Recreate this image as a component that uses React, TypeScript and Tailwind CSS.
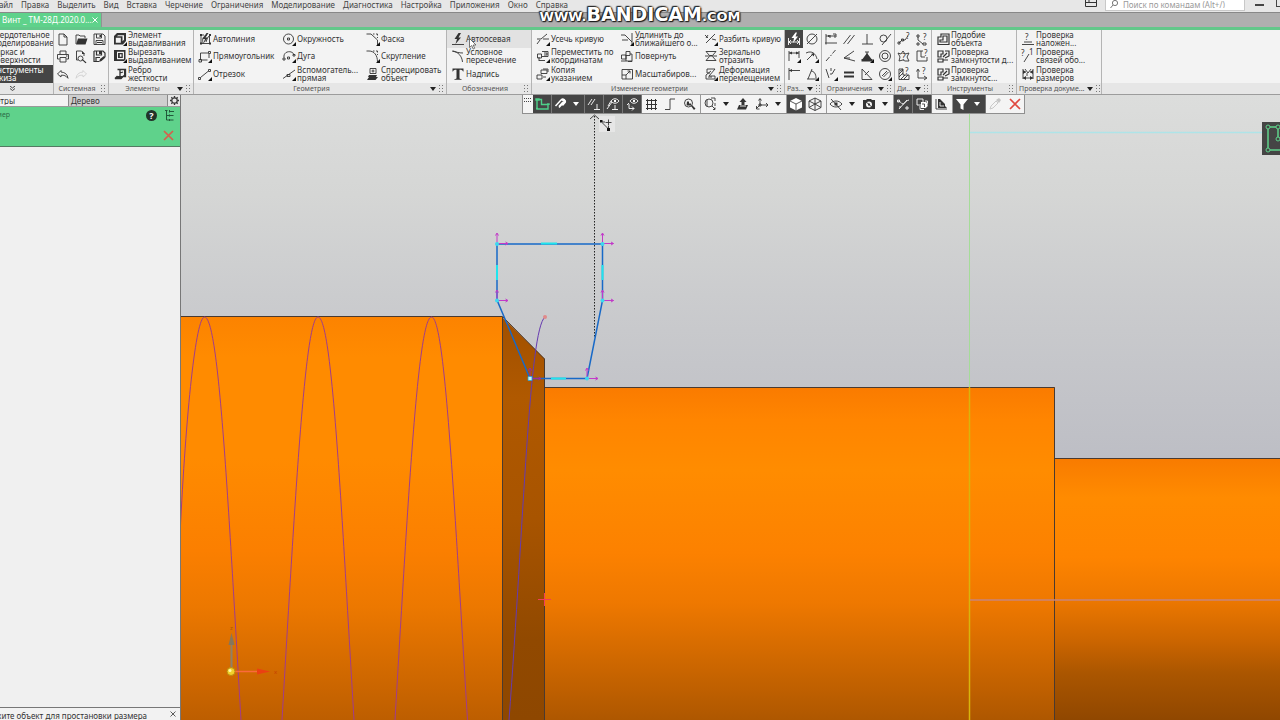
import React from "react";

type Glyph = { s?: string; f?: string; h?: string; w?: number; drop?: boolean; t?: [number, number, string][] };

const glyphs: Record<string, Glyph> = {
  file: { s: "M4 3h5l3 3v8H4zM9 3v3h3" },
  open: { s: "M3 13V4h3l1 1h5v2", f: "M3 13.5l2-6h9.500l-2 6z" },
  save: { s: "M3 3h9l2 2v8.500H3zM5.500 3v4h5V3M5 13.500V9.500h7v4", f: "M8.500 4h1.500v2H8.500zM6 11h5v1H6z" },
  print: { s: "M5 6V3h6v3M4.500 11H2.500V6.500h11V11h-2M5 9.500h6v4.500H5z", f: "M11 7.500h1.500v1H11z" },
  preview: { s: "M5 12H3.500V3h5l2.500 2.500V8M7.500 10.500m-2.500 0a2.500 2.500 0 1 0 5 0a2.500 2.500 0 1 0-5 0", f: "M8.500 11.500l1-.5 4 3.500-1 .8zM8 3h1v3h3l-3-3z" },
  saveas: { s: "M3 3h9l2 2v4M3 3v10.500h5M5.500 3v4h5V3M5 13.500V9.500h4", f: "M8 3h2.500v3H8zM8 14l1-3 4-3 1.500 1.500-4 3.500z", w: 1.2 },
  undo: { s: "M6 4.500L2.500 8 6 11V9.300c3-.5 5 .5 7 3-.500-4-3-6-7-6.300z" },
  redo: { s: "M10 4.500L13.500 8 10 11V9.300c-3-.5-5 .5-7 3 .5-4 3-6 7-6.300z" },
  extrude: { f: "M5 2h9v8l-3 3.500H2V5zM3.800 6.800v5h5v-5zM6 4.300l-1 1h5.500v5l1.500-1.500V4.300z", drop: true },
  cut: { f: "M2 2h11.500v9.500L12 13H2zM5 3.800v7.500h7V3.800zM6 5h4.800v5H6zM7.800 6.300v2.400h1.700V6.300z", drop: true },
  rib: { s: "M5.500 3.500h8v7h-2M3 12.500l2.500-2.500M3 12.500h6l3-3M8 4v7M8 7l3-1", w: 1.3, f: "M2.500 13h6.500l2.500-3h-6zM12 3h2v8h-2z" },
  autoline: { s: "M4 4h3M4 4v8.500M12.500 4v8M5 12.500h7M6 12c-1-4 0-7 4-8M9 11c1-3 2-5 3-6", f: "M9.500 2l-4 6h2.500l-2 5 5-6.500H8.500L11.500 2zM3 3h2v2H3zM12 3h2v2h-2zM3 11.500h2v2H3zM12 11.500h2v2h-2z" },
  rect: { s: "M3.500 5h8M3.500 5v7h7M12 6v4M11.500 3.500h2v2h-2zM2 11.500h2.500V14H2z", drop: true },
  line: { s: "M3.500 11.500l8-6.500M1.500 11.500h2v2h-2zM11.500 3.500h2v2h-2z", drop: true },
  circle: { s: "M7.500 8m-5 0a5 5 0 1 0 10 0a5 5 0 1 0-10 0M6.500 7h2v2h-2z", drop: true },
  arc: { s: "M3 9.500C2 2.500 12 2 13 7M2 10h2v2H2zM6.500 9h2v2h-2zM12 6.500h2v1.500h-2z", drop: true },
  aux: { s: "M2 12.500L14 4M6 8.500h3v2H6z", drop: true },
  chamfer: { s: "M1.500 3h4.500L12.500 9v5M8 3h1.500M11 3h1.500v1.500M12.500 6v1", drop: true },
  fillet: { s: "M1.500 3H4c5 0 8.500 4 8.500 11M8 3h1.500M11 3h1.500v1.500M12.500 6v1", drop: true },
  project: { s: "M5 2.500h6v5H5zM8 3.500v3M6.500 5h3", f: "M4 9h8l-1 2h2l-2.500 3H2l2-3H3z" },
  auto: { s: "M2 13.500h12", f: "M8.500 2l-4 6H7l-1.500 5L11 6.500H8.500L11 2z" },
  intersect: { s: "M2 3c4 1 7 2 11 2M3 3c5 1 9 5 9.500 11" },
  text: { f: "M2.500 2.500h11v3H13c-.3-1.300-1-1.800-3.500-1.800V12c0 .8.500 1 2 1v.8h-7V13c1.500 0 2-.2 2-1V3.700C4 3.700 3.300 4.200 3 5.500h-.500z" },
  trim: { s: "M2 8h4l6-5M2 13l3-4M8 8h6", drop: true },
  move: { s: "M2.500 6h4v4h-4zM7 3.500h6v5H7M4 12.500h6M9 5h3v2H9M4 9v4", drop: true },
  copy: { s: "M6 4h6v3.500H6zM8 3h5v3M2 9h5v4H2zM8 11h3", drop: true },
  extend: { s: "M2 4h4l7 7M13 2v12M3 9h6", drop: true },
  rotate: { s: "M7 3.500h4v4H7zM2.500 7H7v4H2.500zM11 6h2v7.500H9M2 13h11M7 7v6" },
  scale: { s: "M3 3.500h10.500V13H3zM3 9h4v4M7 9l4-4M8.500 5H11v2.500" },
  split: { s: "M3 12L12 3M2 4l3 3M5 4L3 7M9 8l4 1", drop: true },
  mirror: { s: "M3 3.500h10l-3.500 4h-3zM2 8h12M6.500 8.500L3 12.500h10l-3.500-4" },
  deform: { s: "M4 3h8l-6 7h6v3H3V9l5-4M4 3v4h3M5 11h4", drop: true },
  autodim: { s: "M2.500 7v7M13.500 7v7M3 11h10M5 9l-2 2 2 2M11 9l2 2-2 2", f: "M9.500 1.500L5.500 7H8l-1 5 5-6.500H9.500l1.500-4z" },
  dia: { s: "M8 8m-5 0a5 5 0 1 0 10 0a5 5 0 1 0-10 0M3 13L13 3" },
  lindim: { s: "M3 3v10M13 3v7M3 5h10", f: "M3 5l3-1.500v3zM13 5l-3-1.500v3z", drop: true },
  raddim: { s: "M2 5c6-3 10 1 11 6M3 12l6-6", f: "M10 5v3.500L7 6z", drop: true },
  levdim: { s: "M3 2v12M3 4.500h11", f: "M3 4.500L6 3v3z" },
  angdim: { s: "M3 13h10M4 13L8 3M7 5c3 0 5 3 5 7", drop: true },
  fix: { s: "M3 3v10.500M2 12h12M3 5h9M7 4v3M12 4v3M10 3h3v3", f: "M5 4l3 1-3 1z" },
  par: { s: "M2.500 13L9.500 4M6.500 13l7-9" },
  perp: { s: "M3 13h11M8 3v10" },
  tan: { s: "M6.500 7.500m-3.500 0a3.500 3.500 0 1 0 7 0a3.500 3.500 0 1 0-7 0M5 14L14 3" },
  col: { s: "M3 13l3.500-4M7.500 8l1-1.200M9.500 5.500l3-3.500" },
  ang: { s: "M13 3L3 10M3 10l11 3M3 10h6" },
  anchor: { s: "M8 4v5M6 4h4", f: "M8 5L3.500 11H2.500v2.500h11V11h-1z", drop: true },
  conc: { s: "M8 8m-5.500 0a5.500 5.500 0 1 0 11 0a5.500 5.500 0 1 0-11 0M8 8m-3 0a3 3 0 1 0 6 0a3 3 0 1 0-6 0" },
  sym: { s: "M3 3l3 9M12 3l-3 5M8 2v3M8 7v2", drop: true },
  equal: { f: "M3 5.500h10v2H3zM3 9.500h10v2H3z" },
  tri: { s: "M3 3v10.500h10zM6 9l4-4" },
  nofix: { s: "M8 8m-5.500 0a5.500 5.500 0 1 0 11 0a5.500 5.500 0 1 0-11 0M5 10l5-5M6.500 11l5-5", drop: true },
  q1: { s: "M3 12l3-3 3 0 3-4M2 11h2v2H2zM5.500 8h2v2h-2z", t: [[10, 7.5, "?"]] },
  q2: { s: "M3 4h2v2H3zM4 6v3l5 4M3 12h2v2H3zM9 12h3v2H9z", t: [[9, 9, "?"]] },
  q3: { s: "M2 5l3 1 2-3 2 3 4-1-2 4 2 4H9l-2-1-4 1 1-4z", t: [[6, 12, "?"]] },
  q4: { s: "M9 3H3v10h10V9M7 3v6h4", t: [[10, 8, "?"]] },
  q5: { s: "M3 3h4v6h6v4.500H3zM4 5l3-2M3 8l4-4M3 11l4-4M5 13l4-4M8 13l4-4", t: [[9, 8, "?"]] },
  q6: { s: "M4 4v8h8M2.500 5.500L4 3l1.500 2.500M10 10l3 2-3 2", t: [[8, 8, "?"]] },
  similar: { s: "M3 6h3V3h8v10.500H3zM8 5h4v6H5V9h3z", w: 1.2 },
  closed: { s: "M3 3h5v3H6v3H3zM10 3h4v5l-4 2M3 11h5v3H3zM8 9l4-4M8 12h5", w: 1.2 },
  chk1: { s: "M2 13.500h12M4 11h8", t: [[5, 9, "?"]] },
  chk2: { s: "M4 14l5-8", t: [[1, 8, "?"], [9, 7, "1"]] },
  chk3: { s: "M3 3v10M13 3v10M3 6h3M10 6h3M3 12h10M5 3l3 4 3-4M7 7v3", f: "M3 12l3-2v4zM13 12l-3-2v4zM3 4l3 2-3 2zM13 4l-3 2 3 2z" },
  sketch: { s: "M3 3.500h4.500v5H14V13H3zM2 3h3v1H2zM2 12.500h2M13 8h2v1", w: 1.4 },
  magnet: { s: "M2.500 10L8 4c2-2 4.500-.5 3 2l-5 5.500M6 10.500l4-4.500", w: 1.5, f: "M8 4c2-2 6-.5 5 2.500L10 10 8.500 8.500 11 6z" },
  snap: { s: "M2 9l4-6M5 9l4-6M8 13.500h6M11 8v5.500" },
  snapeye: { s: "M6 5c2-3 6-3 8 0-2 3-6 3-8 0zM3 10l3-5M2 13l5-7M7 13.500h6M10 9v4.500", f: "M9 4h2v2H9z" },
  axeye: { s: "M6 5c2-3 6-3 8 0-2 3-6 3-8 0zM5 8v4.500h5M3 9l2-2M8 10.500l2 2-2 2", f: "M9 4h2v2H9z" },
  grid: { s: "M4.500 3v11M8.500 3v11M12.500 3v11M3 4.500h11M3 8.500h11M3 12.500h11", w: 1 },
  step: { s: "M3 13.500h5V3h5" },
  zoomfit: { s: "M7.500 7m-4 0a4 4 0 1 0 8 0a4 4 0 1 0-8 0", f: "M10 10l1-1 3.500 3.500-1.500 1.500zM6 5.500h2v2h2v2H5.500z" },
  zoomarea: { s: "M7 7m-4 0a4 4 0 1 0 8 0a4 4 0 1 0-8 0M10 10l3 3M5 4v6M9 2h4v3M13 7v3M13 11.500v2h-2" },
  orient: { f: "M8 2l3.500 4H9.500v3H13l-2 4.500H2L4 9h2.500V6h-2z", h: "M5 10h6" },
  axes: { s: "M6 3v6l-3.500 3.500M6 9h8M12 7l2 2-2 2M4.500 4.500L6 2.500l1.500 2M2.500 10v3h3M5 8h2v2H5z" },
  cube: { f: "M8 2l6 3v6.500L8 14.500l-6-3V5z", h: "M2 5l6 3 6-3M8 8v6.500" },
  wire: { s: "M8 2l6 3v6.500L8 14.500l-6-3V5zM2 5l6 3 6-3M8 8v6.500M8 2v6M2 11.500L8 8l6 3.500" },
  hide: { s: "M2 8c3-4 9-4 12 0-3 4-9 4-12 0M3 3l10 11", f: "M6.500 6.500h3v3h-3z" },
  camera: { s: "M3 4l10 9", f: "M2 4h3l1-1h4l1 1h3v9H2zM8 5.500a3 3 0 1 0 0 6 3 3 0 0 0 0-6zM7 7.500h2v2H7z" },
  percent: { s: "M3 5c3 0 3 3 5 3s2-3 6-4M4 13l8-9M2.500 4h2v2h-2zM11 11h2v2h-2zM4 11h2" },
  faces: { s: "M3 3h6v6H3zM11 5h2.500v2.500M6 10v3.500h4M11 12l2.500-2", f: "M7 6h5l1.500 1.500V10L11 12H7z", h: "M8 8h2.500v3" },
  view: { s: "M3 3v10h11", f: "M5 3h2l5 5v2l2 2H5z", h: "M7 6v4h4" },
  funnel: { f: "M2 3h12L9.500 8.500V14l-3-1.500V8.500z" },
  dropper: { s: "M3 13l1-3 5-5 2 2-5 5z", f: "M9 4l3-2 2 2-2 3z" },
};

function Icon({ n, c = "#333333", back = "#454545" }: { n: string; c?: string; back?: string }) {
  const g = glyphs[n];
  return (
    <svg viewBox="0 0 16 16" className="size-4 shrink-0" fill="none" aria-hidden="true">
      {g.f && <path d={g.f} fill={c} fillRule="evenodd" />}
      {g.s && <path d={g.s} stroke={c} strokeWidth={g.w ?? 0.9} />}
      {g.h && <path d={g.h} stroke={back} strokeWidth={0.9} />}
      {g.t?.map(([x, y, ch]) => (
        <text key={ch} x={x} y={y} fill={c} fontSize="8" fontFamily="Noto Sans, sans-serif">{ch}</text>
      ))}
      {g.drop && <path d="M15 11v4h-4z" fill="#111111" />}
    </svg>
  );
}

const Arrow = ({ c = "#222222" }: { c?: string }) => (
  <svg viewBox="0 0 6 4" className="h-1 w-1.5 shrink-0" aria-hidden="true"><path d="M0 0h6L3 4z" fill={c} /></svg>
);

const Dots = () => (
  <svg viewBox="0 0 4 7" className="h-[7px] w-1 shrink-0" aria-hidden="true">
    <path d="M0 0h1v1H0zM3 0h1v1H3zM0 3h1v1H0zM3 3h1v1H3zM0 6h1v1H0zM3 6h1v1H3z" fill="#777777" />
  </svg>
);

type Item = [icon: string, label: string];
type GroupData = { title: string; width: string; cols: string; items: Item[]; arrow?: boolean; active?: string };

const groups: GroupData[] = [
  { title: "Системная", width: "w-[55px]", cols: "grid-cols-3", items: [["file", ""], ["open", ""], ["save", ""], ["print", ""], ["preview", ""], ["saveas", ""], ["undo", ""], ["redo", ""]] },
  { title: "Элементы", width: "w-[85px]", cols: "grid-cols-1", arrow: true, items: [["extrude", "Элемент\nвыдавливания"], ["cut", "Вырезать\nвыдавливанием"], ["rib", "Ребро\nжесткости"]] },
  { title: "Геометрия", width: "w-[253px]", cols: "grid-cols-3", arrow: true, items: [["autoline", "Автолиния"], ["circle", "Окружность"], ["chamfer", "Фаска"], ["rect", "Прямоугольник"], ["arc", "Дуга"], ["fillet", "Скругление"], ["line", "Отрезок"], ["aux", "Вспомогатель...\nпрямая"], ["project", "Спроецировать\nобъект"]] },
  { title: "Обозначения", width: "w-[85px]", cols: "grid-cols-1", active: "auto", items: [["auto", "Автоосевая"], ["intersect", "Условное\nпересечение"], ["text", "Надпись"]] },
  { title: "Изменение геометрии", width: "w-[253px]", cols: "grid-cols-3", arrow: true, items: [["trim", "Усечь кривую"], ["extend", "Удлинить до\nближайшего о..."], ["split", "Разбить кривую"], ["move", "Переместить по\nкоординатам"], ["rotate", "Повернуть"], ["mirror", "Зеркально\nотразить"], ["copy", "Копия\nуказанием"], ["scale", "Масштабиров..."], ["deform", "Деформация\nперемещением"]] },
  { title: "Раз...", width: "w-[37px]", cols: "grid-cols-2", arrow: true, active: "autodim", items: [["autodim", ""], ["dia", ""], ["lindim", ""], ["raddim", ""], ["levdim", ""], ["angdim", ""]] },
  { title: "Ограничения", width: "w-[73px]", cols: "grid-cols-4", arrow: true, items: [["fix", ""], ["par", ""], ["perp", ""], ["tan", ""], ["col", ""], ["ang", ""], ["anchor", ""], ["conc", ""], ["sym", ""], ["equal", ""], ["tri", ""], ["nofix", ""]] },
  { title: "Ди...", width: "w-[37px]", cols: "grid-cols-2", arrow: true, items: [["q1", ""], ["q2", ""], ["q3", ""], ["q4", ""], ["q5", ""], ["q6", ""]] },
  { title: "Инструменты", width: "w-[85px]", cols: "grid-cols-1", items: [["similar", "Подобие\nобъекта"], ["closed", "Проверка\nзамкнутости д..."], ["closed", "Проверка\nзамкнутос..."]] },
  { title: "Проверка докуме...", width: "w-[85px]", cols: "grid-cols-1", arrow: true, items: [["chk1", "Проверка\nналожен..."], ["chk2", "Проверка\nсвязей обо..."], ["chk3", "Проверка\nразмеров"]] },
];

function Group({ g }: { g: GroupData }) {
  return (
    <section className={`flex shrink-0 flex-col border-r border-[#b4b4b4] ${g.width}`}>
      <div className={`grid flex-1 grid-rows-3 ${g.cols}`}>
        {g.items.map(([icon, label], i) => {
          const on = g.active === icon;
          const iconOnly = label === "";
          return (
            <button
              key={i}
              aria-label={iconOnly ? icon : undefined}
              className={`flex min-w-0 items-center text-left whitespace-pre ${iconOnly ? "justify-center" : "pl-[3px]"} ${on ? (iconOnly ? "bg-[#454545]" : "bg-[#e2e2e2]") : ""}`}
            >
              <Icon n={icon} c={on && iconOnly ? "#ffffff" : icon === "redo" ? "#d0d0d0" : "#333333"} />
              {!iconOnly && <span>{label}</span>}
            </button>
          );
        })}
      </div>
      <div className="flex h-[11px] items-center gap-[3px] bg-[#e6e6e6] pr-[3px] pl-0.5 text-[7px]">
        <span className="flex-1 text-center whitespace-nowrap text-[#555555]">{g.title}</span>
        {g.arrow && <Arrow />}
        <Dots />
      </div>
    </section>
  );
}

type Tool = { n: string; dark?: boolean; arrow?: boolean; sep?: boolean; c?: string };
const tools: Tool[] = [
  { n: "sketch", dark: true, c: "#4ed08a" },
  { n: "magnet", dark: true, arrow: true },
  { n: "snap", dark: true },
  { n: "snapeye", dark: true },
  { n: "axeye", dark: true },
  { n: "grid" },
  { n: "step" },
  { n: "zoomfit", sep: true },
  { n: "zoomarea", arrow: true },
  { n: "orient" },
  { n: "axes", arrow: true, sep: true },
  { n: "cube", dark: true },
  { n: "wire", sep: true },
  { n: "hide", arrow: true },
  { n: "camera", arrow: true, sep: true },
  { n: "percent", dark: true },
  { n: "faces", dark: true },
  { n: "view", sep: true },
  { n: "funnel", dark: true, arrow: true },
  { n: "dropper", c: "#c4c4c4" },
];

function toolWidth(t: Tool) {
  if (t.arrow) return t.sep ? "w-[34px]" : "w-[33px]";
  return t.sep ? "w-[21px]" : "w-[19px]";
}

function QuickBar() {
  return (
    <div role="toolbar" aria-label="Быстрый доступ" className="absolute top-0 left-[342px] flex h-[19px] border-x border-b border-[#8f8f8f] bg-[#f4f4f4]">
      <div className="flex w-[10px] justify-center pt-[3px]">
        <svg viewBox="0 0 8 4" className="h-1 w-2" aria-hidden="true"><path d="M0 .500h8M0 3.500h8" stroke="#444444" strokeDasharray="1 1" /></svg>
      </div>
      {tools.map((t) => (
        <button
          key={t.n}
          aria-label={t.n}
          className={`flex items-center px-px ${toolWidth(t)} ${t.dark ? "border-r border-[#777777] bg-[#454545]" : t.sep ? "border-r border-[#999999]" : ""}`}
        >
          <Icon n={t.n} c={t.c ?? (t.dark ? "#ffffff" : "#333333")} back={t.dark ? "#454545" : "#f4f4f4"} />
          {t.arrow && <span className="flex flex-1 justify-center"><Arrow c={t.dark ? "#ffffff" : "#222222"} /></span>}
        </button>
      ))}
      <button aria-label="Отмена" className="flex w-[19px] items-center justify-center">
        <svg viewBox="0 0 12 12" className="size-3" aria-hidden="true"><path d="M1 1l10 10M11 1L1 11" stroke="#e0483f" strokeWidth="1.700" /></svg>
      </button>
    </div>
  );
}

const Triad = ({ x, y, c = "#c23ac8" }: { x: number; y: number; c?: string }) => (
  <path d={`M${x} ${y}v-10m-1.500 2l1.500-2.500 1.500 2.500M${x} ${y}h11m-2.500-1.500l2.500 1.500-2.500 1.500`} stroke={c} fill="none" />
);

function Scene() {
  return (
    <svg viewBox="180 95 1100 625" preserveAspectRatio="xMinYMin slice" className="absolute inset-0 size-full" role="img" aria-label="Модель винта">
      <defs>
        <linearGradient id="sky" x1="0" y1="95" x2="0" y2="720" gradientUnits="userSpaceOnUse">
          <stop offset="0" stopColor="#dcdddc" /><stop offset=".16" stopColor="#d5d6d5" /><stop offset=".32" stopColor="#cbccce" /><stop offset=".6" stopColor="#bcbdc4" />
        </linearGradient>
        <linearGradient id="big" x1="0" y1="317" x2="0" y2="720" gradientUnits="userSpaceOnUse">
          <stop offset="0" stopColor="#fc8300" /><stop offset=".1" stopColor="#ff8b00" /><stop offset=".35" stopColor="#ff8b00" /><stop offset=".58" stopColor="#fb7f00" /><stop offset=".72" stopColor="#ec7800" /><stop offset="1" stopColor="#bd5e00" />
        </linearGradient>
        <linearGradient id="mid" x1="0" y1="387" x2="0" y2="720" gradientUnits="userSpaceOnUse">
          <stop offset="0" stopColor="#fa7b00" /><stop offset=".1" stopColor="#ff8500" /><stop offset=".25" stopColor="#ff8c00" /><stop offset=".5" stopColor="#fc8100" /><stop offset=".65" stopColor="#ee7800" /><stop offset="1" stopColor="#ae5700" />
        </linearGradient>
        <linearGradient id="small" x1="0" y1="458" x2="0" y2="720" gradientUnits="userSpaceOnUse">
          <stop offset="0" stopColor="#f87b00" /><stop offset=".15" stopColor="#ff8b00" /><stop offset=".38" stopColor="#fe8400" /><stop offset=".54" stopColor="#ed7800" /><stop offset=".7" stopColor="#cb6500" /><stop offset=".82" stopColor="#ab5600" /><stop offset="1" stopColor="#904700" />
        </linearGradient>
        <linearGradient id="cone" x1="0" y1="317" x2="0" y2="720" gradientUnits="userSpaceOnUse">
          <stop offset="0" stopColor="#a15000" /><stop offset=".2" stopColor="#b05900" /><stop offset=".5" stopColor="#a85400" /><stop offset=".8" stopColor="#914900" /><stop offset="1" stopColor="#8e4700" />
        </linearGradient>
      </defs>
      <path d="M180 95h1100v625H180z" fill="url(#sky)" />
      <path d="M180 317h322v404H180z" fill="url(#big)" />
      <path d="M502 317l43 42v362h-43z" fill="url(#cone)" />
      <path d="M545 387h510v334H545z" fill="url(#mid)" />
      <path d="M1055 458h226v263h-226z" fill="url(#small)" />
      <g fill="none" stroke="#4a3a30">
        <path d="M180 316.500h322.500L544.500 359V720M502.500 317v403M545 387.500h509.500V720M1055 458.500h225" />
      </g>
      <g fill="none" stroke="#a03c8c">
        <path d="M180 535C186 410 196 317 204.500 317C219 317 228 500 241 720" />
        <path d="M282 720C295 500 305 317 318 317C332 317 341 500 354 720" />
        <path d="M395 720C408 500 418 317 431.500 317C445 317 454 500 467.500 720" />
        <path d="M509 720C524 520 529 330 545 317" stroke="#663ab0" />
      </g>
      <circle cx="545" cy="317" r="2" fill="#e08a8a" />
      <path d="M969.500 95V387" stroke="#a5dc98" /><path d="M969.500 387V720" stroke="#d8b40c" strokeWidth="1.500" />
      <path d="M970 132.500h310" stroke="#aee4e8" strokeWidth="1.500" />
      <path d="M970 600h310" stroke="#c88478" strokeWidth="1.500" />
      <path d="M594.500 116V337" stroke="#222222" strokeDasharray="1.500 1.500" />
      <path d="M590 119l4.500-4 4.500 4" stroke="#444444" fill="none" />
      <path d="M497 300V244h105.500v56.500L587 378.500h-57L497 300z" fill="none" stroke="#1769c8" strokeWidth="1.500" />
      <path d="M541 243.500h16M497 265v15M602.500 265v15M551 378.500h15" stroke="#20e4ee" strokeWidth="2" />
      <Triad x={497} y={243.5} /><Triad x={602.5} y={243.5} /><Triad x={497} y={300.5} /><Triad x={602.5} y={300.5} />
      <Triad x={530} y={378.5} c="#9c2c9c" /><Triad x={587} y={378.5} />
      {[[497, 244], [602.5, 244], [497, 300.5], [602.5, 300.5], [587, 378.5], [530, 378.5]].map(([x, y]) => (
        <circle key={`${x}-${y}`} cx={x} cy={y} r="2" fill="#3cd8f0" />
      ))}
      <path d="M528 376.500h4v4h-4z" fill="#bff4fa" stroke="#2a9cd0" strokeWidth=".8" />
      <path d="M538 599.500h13M544.500 593v13" stroke="#f03c5c" />
      <path d="M231.500 668V641" stroke="#8e8068" strokeWidth="2" /><path d="M228.500 645l3-12 3 12z" fill="#85765c" />
      <path d="M234 671.500h27" stroke="#fa6a3c" strokeWidth="1.500" /><path d="M257 668.500l13 3-13 3z" fill="#ea4012" />
      <text x="230" y="630" fontSize="6" fill="#a65400" fontFamily="Noto Sans, sans-serif">z</text>
      <text x="274" y="674" fontSize="6" fill="#c53c00" fontFamily="Noto Sans, sans-serif">x</text>
      <circle cx="231" cy="671.500" r="4" fill="#f2d02c" stroke="#b98a10" /><circle cx="230" cy="670.500" r="1.500" fill="#fff9a8" />
      <path d="M599 116h16v16h-16z" fill="#e6e6e6" />
      <path d="M602 122h3M602.500 123l6 6V126" stroke="#333333" fill="none" strokeWidth=".9" />
      <path d="M600 120h2.500v2.500H600zM607 128h3v3h-3z" fill="#111111" /><path d="M605.500 122.500h6M608.500 119.500v6" stroke="#333333" strokeWidth=".9" />
    </svg>
  );
}

const menus = ["Правка", "Выделить", "Вид", "Вставка", "Черчение", "Ограничения", "Моделирование", "Диагностика", "Настройка", "Приложения", "Окно", "Справка"];
const modes = ["Твердотельное\nмоделирование", "Каркас и\nповерхности", "Инструменты\nэскиза"];

export default function App() {
  return (
    <div className="relative flex h-screen flex-col overflow-hidden bg-[#f1f1f1] font-['Noto_Sans',sans-serif] text-[8px] leading-[8px] text-[#333333]">
      <header className="flex h-[13px] shrink-0 items-start justify-between overflow-hidden border-b border-[#888888] bg-[#e7e7e7]">
        <nav className="flex gap-2 leading-[10px] text-[#444444]">
          <a href="#file" className="flex w-[13px] justify-end overflow-hidden whitespace-nowrap">Файл</a>
          {menus.map((m) => <a key={m} href={`#${m}`} className="whitespace-nowrap">{m}</a>)}
        </nav>
        <div className="flex h-full items-start gap-2 overflow-hidden">
          <button aria-label="Вид окна">
            <svg viewBox="0 0 12 8" className="h-2 w-3" aria-hidden="true"><path d="M.500 0v6.500h11V0M.500 2.500h11M4 0v2" stroke="#333333" fill="none" /></svg>
          </button>
          <label className="flex h-[11px] w-[140px] items-start gap-1 border-x border-b border-[#c8c8c8] bg-white pl-1">
            <svg viewBox="0 0 9 8" className="h-2 w-[9px] shrink-0" aria-hidden="true"><circle cx="5" cy="3" r="2.600" fill="none" stroke="#777777" /><path d="M3 5L.500 8" stroke="#777777" /></svg>
            <input aria-label="Поиск по командам" placeholder="Поиск по командам (Alt+/)" className="h-2 min-w-0 flex-1 bg-transparent text-[8px] leading-[8px] outline-none placeholder:text-[#999999]" />
          </label>
          <button aria-label="Свернуть" className="ml-0.5 h-1.5 w-[9px] border-b-2 border-[#444444]" />
          <button aria-label="Развернуть" className="ml-1 h-[7px] w-1 border-b border-l border-[#444444]" />
        </div>
      </header>

      <div className="flex h-[17px] shrink-0 border-b-[3px] border-[#62c88a] bg-[#afafaf]">
        <div className="flex w-[102px] items-center justify-between border-r border-[#929292] bg-[#5fd28b] pr-1 pl-0.5 text-white">
          <span className="whitespace-nowrap">Винт _ ТМ-28Д.2020.0...</span>
          <button aria-label="Закрыть вкладку">
            <svg viewBox="0 0 6 6" className="size-1.5" aria-hidden="true"><path d="M.500.500l5 5M5.500.500l-5 5" stroke="#ffffff" /></svg>
          </button>
        </div>
      </div>

      <div className="flex h-[65px] shrink-0 border-b border-[#9c9c9c] bg-[#f3f3f3]">
        <section className="flex w-[54px] shrink-0 flex-col overflow-hidden border-r border-[#b4b4b4]">
          <div className="-ml-2.5 grid flex-1 grid-rows-3">
            {modes.map((m, i) => (
              <button key={m} className={`flex items-center pl-px text-left whitespace-pre ${i === 2 ? "bg-[#454545] text-white" : ""}`}>{m}</button>
            ))}
          </div>
          <button aria-label="Ещё режимы" className="flex h-[11px] items-center bg-[#e6e6e6] pl-2.5">
            <svg viewBox="0 0 5 5" className="size-[5px]" aria-hidden="true"><path d="M0 0l2.500 2L5 0M0 2.500l2.500 2 2.500-2" stroke="#444444" fill="none" /></svg>
          </button>
        </section>
        {groups.map((g) => <Group key={g.title} g={g} />)}
        <div className="flex flex-1 items-end"><div className="h-[11px] flex-1 bg-[#e6e6e6]" /></div>
      </div>

      <main className="flex min-h-0 flex-1">
        <aside className="flex w-[180px] shrink-0 flex-col shadow-[1px_0_0_#777777] z-10">
          <div className="flex h-3 shrink-0 border-b border-[#999999] bg-[#cfcfcf]">
            <button className="flex w-[69px] items-center border-r border-[#8a8a8a] bg-[#f3f3f3]">
              <span className="flex w-[15px] justify-end overflow-hidden whitespace-nowrap">Параметры</span>
            </button>
            <button className="flex-1 pl-0.5 text-left">Дерево</button>
            <button aria-label="Настройки панели" className="flex w-[13px] items-center justify-center border-l border-[#8a8a8a] bg-[#e6e6e6]">
              <svg viewBox="0 0 10 10" className="size-[9px]" aria-hidden="true"><circle cx="5" cy="5" r="3" fill="none" stroke="#333333" strokeWidth="1.300" /><path d="M5 0v2M5 8v2M0 5h2M8 5h2M1.500 1.500l1.200 1.200M7.300 7.300l1.200 1.200M8.500 1.500L7.300 2.700M2.700 7.300L1.500 8.500" stroke="#333333" strokeWidth="1.500" /></svg>
            </button>
          </div>
          <div className="flex h-10 shrink-0 justify-between border-b border-[#557a63] bg-[#5fd28b]">
            <h2 className="flex h-4 w-2.5 items-center justify-end overflow-hidden text-[7px] whitespace-nowrap text-[#2c6b47]">Размер</h2>
            <div className="flex flex-col items-end justify-between pt-[3px] pr-1.5 pb-[5px]">
              <div className="flex items-center gap-2">
                <button aria-label="Справка" className="flex size-[11px] items-center justify-center rounded-full bg-[#22332a] text-[9px] font-bold text-white">?</button>
                <button aria-label="Дерево построения">
                  <svg viewBox="0 0 9 11" className="h-[11px] w-[9px]" aria-hidden="true"><path d="M0 .500h2.500M1.500 .500v9.500h3M1.500 5.500h3M5 1.500h4M5 5.500h3.500M5 10h3.500M4.500 0v2.500M4.500 4.500v2M4.500 9v2" stroke="#22593a" fill="none" /></svg>
                </button>
              </div>
              <button aria-label="Отменить команду">
                <svg viewBox="0 0 11 11" className="size-[11px]" aria-hidden="true"><path d="M1 1l9 9M10 1l-9 9" stroke="#d65f4c" strokeWidth="1.700" /></svg>
              </button>
            </div>
          </div>
          <div className="flex-1 bg-[#f0f0f0]" />
          <footer className="flex h-[13px] shrink-0 items-end justify-between border-t border-[#777777] bg-[#f2f2f2] pr-1">
            <span className="flex w-[147px] justify-end overflow-hidden whitespace-nowrap">Укажите объект для простановки размера</span>
            <button aria-label="Закрыть подсказку" className="self-center">
              <svg viewBox="0 0 6 6" className="size-1.5" aria-hidden="true"><path d="M.500.500l5 5M5.500.500l-5 5" stroke="#333333" strokeWidth=".8" /></svg>
            </button>
          </footer>
        </aside>
        <div className="relative min-w-0 flex-1 overflow-hidden">
          <Scene />
          <QuickBar />
          <button aria-label="Режим эскиза" className="absolute top-[27px] right-0 h-[33px] w-[18px] overflow-hidden bg-[#454545]">
            <svg viewBox="0 0 18 33" className="h-[33px] w-[18px]" aria-hidden="true">
              <path d="M6 5v23h12M6 5h10v11h2" stroke="#5fd28b" strokeWidth="1.500" fill="none" />
              <g fill="#454545" stroke="#5fd28b"><circle cx="6" cy="5" r="2" /><circle cx="16" cy="5" r="2" /><circle cx="16" cy="17" r="2" /><circle cx="6" cy="28" r="2" /></g>
            </svg>
          </button>
        </div>
      </main>

      <div className="pointer-events-none absolute inset-x-0 top-[5px] flex items-baseline justify-center font-['DejaVu_Sans',sans-serif] text-[13px] leading-[18px] font-bold text-white [text-shadow:0_0_2px_#111,0_0_2px_#111,1px_1px_1px_#222,-1px_-1px_1px_#333]">
        <span>WWW.</span><span className="text-[19px] leading-[18px]">BANDICAM</span><span>.COM</span>
      </div>
      <svg viewBox="0 0 8 12" className="pointer-events-none absolute top-[38px] left-[469px] h-3 w-2" aria-hidden="true"><path d="M.500.500v9l2.200-2 1.500 3.500 1.500-.7-1.500-3.300H7z" fill="#ffffff" stroke="#555555" strokeWidth=".8" /></svg>
    </div>
  );
}
